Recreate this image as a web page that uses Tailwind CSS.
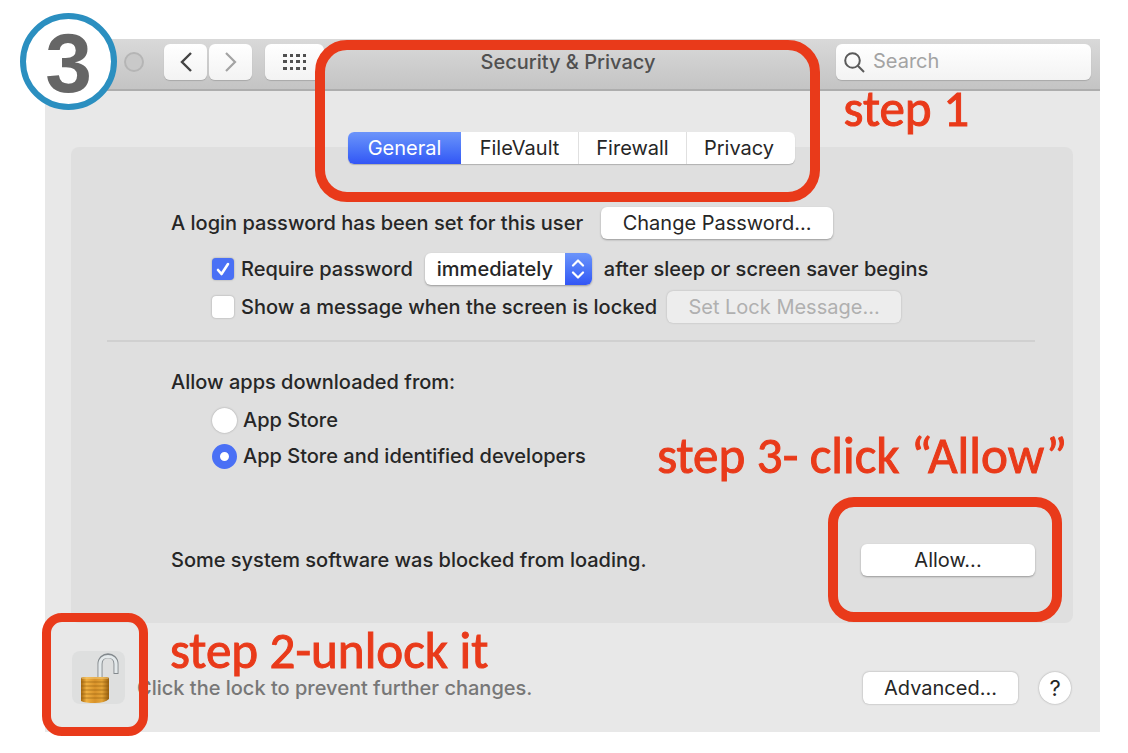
<!DOCTYPE html>
<html lang="en">
<head>
    <meta charset="UTF-8">
    <meta name="viewport" content="width=device-width, initial-scale=1.0">
    <title>Security &amp; Privacy</title>
    <script src="https://cdn.jsdelivr.net/npm/@tailwindcss/browser@4"></script>
    <style>
        /* thicken the red notes a little */
        .note { -webkit-text-stroke: 1px #e93a1a; }
    </style>
</head>
<body class="bg-white font-['Inter','Liberation_Sans',sans-serif] text-[20px] leading-8 text-[#262626]">
    <div class="relative pt-[39px] pr-7 pb-5 pl-[45px]">

        <!-- Step number -->
        <div class="absolute top-[13px] left-5 z-20 flex size-[97px] items-center justify-center rounded-full border-[6px] border-[#2b8fc0] bg-white pt-0.5 font-['Liberation_Sans',sans-serif] text-[84px] leading-none font-bold text-[#666]">3</div>

        <main class="relative bg-[#e8e8e8]">
            <!-- Title bar -->
            <header class="grid h-[52px] grid-cols-[1fr_auto_1fr] items-center border-b-2 border-[#adadad] bg-linear-to-b from-[#d9d9d9] to-[#c4c4c4] pr-[9px]">
                <div class="flex items-center pb-1 pl-[79px]">
                    <span class="mr-5 size-5 rounded-full border-2 border-[#b5b5b5] bg-[#c9c9c9]"></span>
                    <button type="button" aria-label="Back" class="mr-0.5 flex h-9 w-[43px] items-center justify-center rounded-md bg-linear-to-b from-white to-[#f3f3f3] shadow-[0_1px_1px_#a8a8a8]">
                        <svg width="12" height="20" viewBox="0 0 12 20" fill="none" stroke="#444" stroke-width="2.4"><path d="M11 1L2 10l9 9"/></svg>
                    </button>
                    <button type="button" aria-label="Forward" class="mr-[13px] flex h-9 w-[43px] items-center justify-center rounded-md bg-linear-to-b from-white to-[#f3f3f3] shadow-[0_1px_1px_#a8a8a8]">
                        <svg width="12" height="20" viewBox="0 0 12 20" fill="none" stroke="#a3a3a3" stroke-width="2.2"><path d="M1 1l9 9-9 9"/></svg>
                    </button>
                    <button type="button" aria-label="Show all" class="flex h-9 w-[59px] items-center justify-center rounded-md bg-linear-to-b from-white to-[#f3f3f3] shadow-[0_1px_1px_#a8a8a8]">
                        <svg width="24" height="18" viewBox="0 0 24 18" fill="#505050">
                            <path d="M0 1h4v3H0zM7 1h3v3H7zM13 1h4v3h-4zM20 1h3v3h-3zM0 7h4v3H0zM7 7h3v3H7zM13 7h4v3h-4zM20 7h3v3h-3zM0 14h4v3H0zM7 14h3v3H7zM13 14h4v3h-4zM20 14h3v3h-3z"/>
                        </svg>
                    </button>
                </div>
                <h1 class="pb-1 font-medium text-[#505050]">Security &amp; Privacy</h1>
                <div class="pb-1">
                    <label class="ml-auto flex h-9 w-[255px] items-center gap-2 rounded-md bg-linear-to-b from-white to-[#f3f3f3] px-2 shadow-[0_1px_1px_#a8a8a8]">
                        <svg class="shrink-0" width="21" height="21" viewBox="0 0 21 21" fill="none" stroke="#5a5a5a" stroke-width="2"><circle cx="8.5" cy="8.5" r="7.3"/><path d="M13.8 13.8l6.2 6.2"/></svg>
                        <input type="search" aria-label="Search" placeholder="Search" class="w-full pb-0.5 outline-none placeholder:text-[#a3a3a3]">
                    </label>
                </div>
            </header>

            <div class="note absolute top-[46px] right-[131px] font-['Carlito','Lato',sans-serif] text-[51px] leading-[48px] whitespace-nowrap text-[#e93a1a]">step 1</div>

            <!-- Tabs -->
            <nav class="relative z-10 mt-[41px] flex justify-center pr-0.5">
                <div class="relative flex h-8 rounded-md bg-white shadow-[0_1px_1px_#b0b0b0]">
                    <button type="button" class="w-[113px] rounded-l-md bg-linear-to-b from-[#6c94fa] to-[#3355f5] text-white">General</button>
                    <button type="button" class="w-[118px] border-r border-[#e0e0e0]">FileVault</button>
                    <button type="button" class="w-[108px] border-r border-[#e0e0e0]">Firewall</button>
                    <button type="button" class="w-[108px] pr-1">Privacy</button>
                    <div class="pointer-events-none absolute -top-[92px] -right-[25px] -bottom-[38px] -left-[33px] rounded-[32px] border-10 border-[#e93a1a]"></div>
                </div>
            </nav>

            <!-- General pane -->
            <section class="relative mr-[27px] ml-[26px] -mt-[17px] rounded-lg bg-[#dfdfdf] pt-15 pr-[38px] pb-[47px] pl-9">
                <div class="flex flex-col pl-16 font-medium">
                    <div class="flex items-center gap-[18px]">
                        <span>A login password has been set for this user</span>
                        <button type="button" class="h-8 w-[232px] rounded-md bg-white font-normal shadow-[0_1px_2px_#999]">Change Password...</button>
                    </div>
                    <div class="mt-3.5 flex items-center pl-[41px]">
                        <label class="flex items-center gap-[7px]">
                            <span class="relative flex size-[22px]">
                                <input type="checkbox" checked class="size-full appearance-none rounded-[4px] bg-white shadow-[0_0_2px_#999] checked:bg-[#4a70f5]">
                                <svg class="pointer-events-none absolute inset-0" width="22" height="22" viewBox="0 0 22 22" fill="none" stroke="#fff" stroke-width="2.6" stroke-linecap="round" stroke-linejoin="round"><path d="M6 12l3.5 4L16 6"/></svg>
                            </span>
                            Require password
                        </label>
                        <div class="relative mx-3 flex">
                            <select aria-label="Delay" class="h-8 w-[167px] appearance-none rounded-md bg-white pl-3 shadow-[0_1px_2px_#999]">
                                <option>immediately</option>
                            </select>
                            <span class="pointer-events-none absolute inset-y-0 right-0 flex w-[27px] items-center justify-center rounded-r-md bg-linear-to-b from-[#6c94fa] to-[#3355f5]">
                                <svg width="14" height="20" viewBox="0 0 14 20" fill="none" stroke="#fff" stroke-width="2.2" stroke-linecap="round" stroke-linejoin="round"><path d="M2 6.5l5-5 5 5M2 13.5l5 5 5-5"/></svg>
                            </span>
                        </div>
                        <span>after sleep or screen saver begins</span>
                    </div>
                    <div class="mt-1.5 flex items-center gap-2.5 pl-[41px]">
                        <label class="flex items-center gap-[7px]">
                            <input type="checkbox" class="size-[22px] appearance-none rounded-[4px] bg-white shadow-[0_0_2px_#999] checked:bg-[#4a70f5]">
                            Show a message when the screen is locked
                        </label>
                        <button type="button" disabled class="h-8 w-[234px] rounded-md bg-[#ededed] font-normal text-[#b0b0b0] shadow-[0_0_2px_#b0b0b0]">Set Lock Message...</button>
                    </div>
                </div>

                <hr class="mt-[17px] border-t-2 border-[#d0d0d0]">

                <fieldset class="mt-6 flex flex-col pl-16 font-medium">
                    <legend class="contents">Allow apps downloaded from:</legend>
                    <label class="mt-1.5 flex items-center gap-1.5 pl-[41px]">
                        <input type="radio" name="source" class="size-[25px] appearance-none rounded-full bg-white shadow-[0_0_2px_#999] checked:border-8 checked:border-[#4a70f5]">
                        App Store
                    </label>
                    <label class="mt-1 flex items-center gap-1.5 pl-[41px]">
                        <input type="radio" name="source" checked class="size-[25px] appearance-none rounded-full bg-white checked:border-8 checked:border-[#4a70f5]">
                        App Store and identified developers
                    </label>
                </fieldset>

                <div class="mt-[72px] flex items-center justify-between pl-16">
                    <span class="font-medium">Some system software was blocked from loading.</span>
                    <div class="relative flex">
                        <button type="button" class="h-8 w-[174px] rounded-md bg-white shadow-[0_1px_2px_#999]">Allow...</button>
                        <div class="pointer-events-none absolute -top-[47px] -right-[27px] -bottom-[46px] -left-[33px] rounded-[26px] border-10 border-[#e93a1a]"></div>
                    </div>
                </div>
                <div class="note absolute right-1.5 bottom-[143px] font-['Carlito','Lato',sans-serif] text-[51px] leading-[48px] whitespace-nowrap text-[#e93a1a]">step 3- click “Allow”</div>
            </section>

            <!-- Lock row -->
            <footer class="relative flex items-end py-7 pr-[29px] pl-[27px]">
                <div class="relative z-10 mr-3">
                    <button type="button" aria-label="Lock" class="flex size-[53px] items-center justify-center rounded-lg bg-[#dedfdf]">
                        <svg width="53" height="53" viewBox="0 0 53 53" fill="none">
                            <defs>
                                <linearGradient id="brass" x1="0" x2="1" y1="0" y2="0">
                                    <stop offset="0" stop-color="#a8690f"/>
                                    <stop offset=".2" stop-color="#f0b040"/>
                                    <stop offset=".5" stop-color="#d8922a"/>
                                    <stop offset=".75" stop-color="#e5a437"/>
                                    <stop offset="1" stop-color="#99600f"/>
                                </linearGradient>
                            </defs>
                            <path d="M28 27V13c0-11 16-11 16 0v10" stroke="#83898d" stroke-width="5"/>
                            <path d="M28 27V13c0-10 16-10 16 0v9" stroke="#e4e9eb" stroke-width="3.2"/>
                            <path d="M9 28q0-2 2-2h24q2 0 2 2v20q-4 4-14 4-10 0-14-2z" fill="url(#brass)"/>
                            <path d="M9 31h28M9 35h28M9 39h28M9 43h28M9 47h28" stroke="#8d570c" stroke-opacity=".55"/>
                            <path d="M10 27h26" stroke="#f6ce7c"/>
                        </svg>
                    </button>
                    <div class="pointer-events-none absolute -top-[38px] -right-[23px] -bottom-8 -left-[30px] rounded-[20px] border-[9px] border-[#e93a1a]"></div>
                </div>
                <span class="font-medium text-[#777]">Click the lock to prevent further changes.</span>
                <div class="note absolute top-1 left-[125px] z-10 font-['Carlito','Lato',sans-serif] text-[51px] leading-[48px] whitespace-nowrap text-[#e93a1a]">step 2-unlock it</div>
                <button type="button" class="mr-[21px] ml-auto h-8 w-[155px] rounded-md bg-white shadow-[0_0_2px_#999]">Advanced...</button>
                <button type="button" aria-label="Help" class="size-8 rounded-full bg-white text-[22px] shadow-[0_0_2px_#999]">?</button>
            </footer>
        </main>
    </div>
</body>
</html>
